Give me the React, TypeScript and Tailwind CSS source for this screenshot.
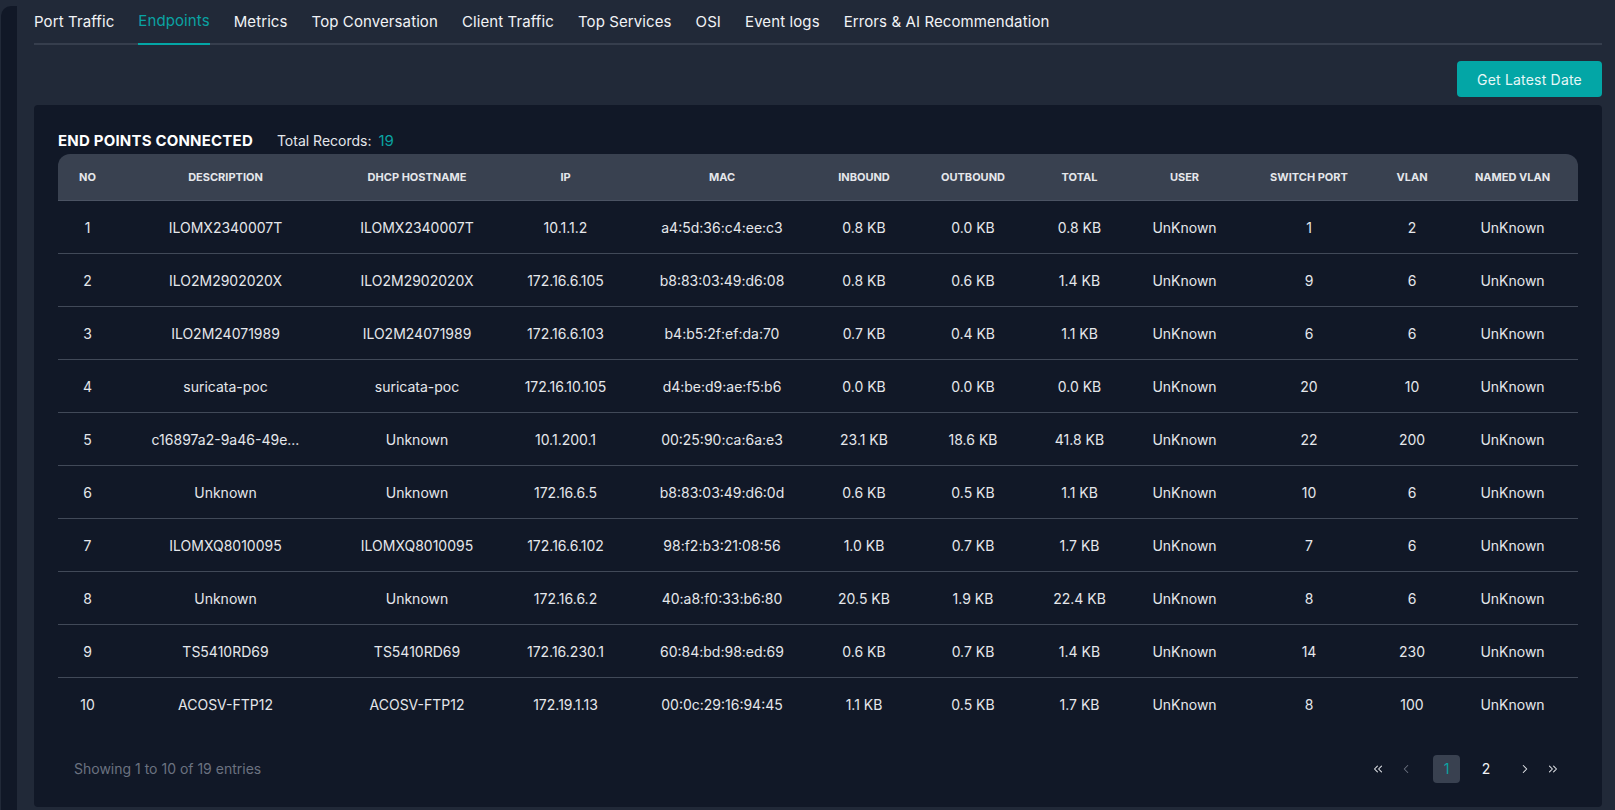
import { ChevronLeft, ChevronRight, ChevronsLeft, ChevronsRight } from 'lucide-react'

const TABS = [
  'Port Traffic',
  'Endpoints',
  'Metrics',
  'Top Conversation',
  'Client Traffic',
  'Top Services',
  'OSI',
  'Event logs',
  'Errors & AI Recommendation',
]

const COLUMNS: { label: string; width: number }[] = [
  { label: 'NO', width: 59 },
  { label: 'DESCRIPTION', width: 217 },
  { label: 'DHCP HOSTNAME', width: 166 },
  { label: 'IP', width: 131 },
  { label: 'MAC', width: 182 },
  { label: 'INBOUND', width: 102 },
  { label: 'OUTBOUND', width: 116 },
  { label: 'TOTAL', width: 97 },
  { label: 'USER', width: 113 },
  { label: 'SWITCH PORT', width: 136 },
  { label: 'VLAN', width: 70 },
  { label: 'NAMED VLAN', width: 131 },
]

const ROWS = [
  ['1', 'ILOMX2340007T', 'ILOMX2340007T', '10.1.1.2', 'a4:5d:36:c4:ee:c3', '0.8 KB', '0.0 KB', '0.8 KB', 'UnKnown', '1', '2', 'UnKnown'],
  ['2', 'ILO2M2902020X', 'ILO2M2902020X', '172.16.6.105', 'b8:83:03:49:d6:08', '0.8 KB', '0.6 KB', '1.4 KB', 'UnKnown', '9', '6', 'UnKnown'],
  ['3', 'ILO2M24071989', 'ILO2M24071989', '172.16.6.103', 'b4:b5:2f:ef:da:70', '0.7 KB', '0.4 KB', '1.1 KB', 'UnKnown', '6', '6', 'UnKnown'],
  ['4', 'suricata-poc', 'suricata-poc', '172.16.10.105', 'd4:be:d9:ae:f5:b6', '0.0 KB', '0.0 KB', '0.0 KB', 'UnKnown', '20', '10', 'UnKnown'],
  ['5', 'c16897a2-9a46-49e...', 'Unknown', '10.1.200.1', '00:25:90:ca:6a:e3', '23.1 KB', '18.6 KB', '41.8 KB', 'UnKnown', '22', '200', 'UnKnown'],
  ['6', 'Unknown', 'Unknown', '172.16.6.5', 'b8:83:03:49:d6:0d', '0.6 KB', '0.5 KB', '1.1 KB', 'UnKnown', '10', '6', 'UnKnown'],
  ['7', 'ILOMXQ8010095', 'ILOMXQ8010095', '172.16.6.102', '98:f2:b3:21:08:56', '1.0 KB', '0.7 KB', '1.7 KB', 'UnKnown', '7', '6', 'UnKnown'],
  ['8', 'Unknown', 'Unknown', '172.16.6.2', '40:a8:f0:33:b6:80', '20.5 KB', '1.9 KB', '22.4 KB', 'UnKnown', '8', '6', 'UnKnown'],
  ['9', 'TS5410RD69', 'TS5410RD69', '172.16.230.1', '60:84:bd:98:ed:69', '0.6 KB', '0.7 KB', '1.4 KB', 'UnKnown', '14', '230', 'UnKnown'],
  ['10', 'ACOSV-FTP12', 'ACOSV-FTP12', '172.19.1.13', '00:0c:29:16:94:45', '1.1 KB', '0.5 KB', '1.7 KB', 'UnKnown', '8', '100', 'UnKnown'],
]

function Tabs() {
  return (
    <nav className="flex gap-6 border-b-2 border-[#363e4d]">
      {TABS.map((tab) => {
        const active = tab === 'Endpoints'
        return (
          <div
            key={tab}
            className={
              active
                ? '-mb-[2px] border-b-2 border-[#03a6a6] pt-[11px] pb-[12px] text-[15px] leading-5 tracking-[0.1px] text-[#0aa3a3]'
                : '-mb-[2px] border-b-2 border-transparent pt-3 pb-[11px] text-[15px] leading-5 tracking-[0.1px] text-[#f1f3f6]'
            }
          >
            {tab}
          </div>
        )
      })}
    </nav>
  )
}

function Pagination() {
  return (
    <div className="flex items-center">
      <button type="button" className="flex h-7 w-7 items-center justify-center text-[#e5e7eb]">
        <ChevronsLeft size={14} strokeWidth={1.75} />
      </button>
      <button type="button" className="flex h-7 w-7 items-center justify-center text-[#6b7280]">
        <ChevronLeft size={14} strokeWidth={1.75} />
      </button>
      <button
        type="button"
        className="ml-[13px] flex h-7 w-[27px] items-center justify-center rounded bg-[#394150] text-[14px] text-[#0aa3a3]"
      >
        1
      </button>
      <button type="button" className="ml-3 flex h-7 w-7 items-center justify-center text-[14px] text-[#f1f3f6]">
        2
      </button>
      <button type="button" className="ml-[11px] flex h-7 w-7 items-center justify-center text-[#e5e7eb]">
        <ChevronRight size={14} strokeWidth={1.75} />
      </button>
      <button type="button" className="flex h-7 w-7 items-center justify-center text-[#e5e7eb]">
        <ChevronsRight size={14} strokeWidth={1.75} />
      </button>
    </div>
  )
}

export default function App() {
  return (
    <div
      className="flex h-[810px] w-full overflow-hidden bg-[#212938]"
      style={{ fontFamily: 'Inter, "Noto Sans", sans-serif' }}
    >
      <aside className="ml-[1px] mt-[6px] w-[16px] flex-shrink-0 rounded-tl-[10px] bg-[#111827]" />

      <main className="flex min-w-0 flex-1 flex-col pl-[17px] pr-[13px]">
        <Tabs />

        <div className="mt-4 flex justify-end">
          <button
            type="button"
            className="h-9 rounded bg-[#03a6a6] px-[20px] text-[14px] tracking-[0.2px] text-[#e6f7f7]"
          >
            Get Latest Date
          </button>
        </div>

        <section className="mt-2 rounded bg-[#111827] px-6 pt-[25px] pb-6">
          <div className="flex items-baseline">
            <h2 className="text-[15px] font-bold leading-5 tracking-[0.2px] text-white">END POINTS CONNECTED</h2>
            <span className="ml-6 text-[14px] text-[#e5e7eb]">Total Records:</span>
            <span className="ml-[7px] text-[15px] text-[#0aa3a3]">19</span>
          </div>

          <table className="mt-px w-full table-fixed border-collapse">
            <colgroup>
              {COLUMNS.map((c) => (
                <col key={c.label} style={{ width: c.width }} />
              ))}
            </colgroup>
            <thead>
              <tr className="h-[47px] bg-[#394150]">
                {COLUMNS.map((c, i) => (
                  <th
                    key={c.label}
                    className={`border-b border-[#4b5363] text-center text-[11px] font-bold text-[#e5e7eb] ${
                      i === 0 ? 'rounded-tl-xl' : ''
                    } ${i === COLUMNS.length - 1 ? 'rounded-tr-xl' : ''}`}
                  >
                    {c.label}
                  </th>
                ))}
              </tr>
            </thead>
            <tbody>
              {ROWS.map((row, r) => (
                <tr
                  key={row[0]}
                  className={r === ROWS.length - 1 ? 'h-[53px]' : 'h-[53px] border-b border-[#414958]'}
                >
                  {row.map((cell, i) => (
                    <td
                      key={i}
                      className="truncate text-center text-[14px] text-[#e5e7eb]"
                    >
                      {cell}
                    </td>
                  ))}
                </tr>
              ))}
            </tbody>
          </table>

          <div className="mt-6 flex items-center justify-between pl-4 pr-[11px]">
            <p className="text-[14px] text-[#6b7280]">Showing 1 to 10 of 19 entries</p>
            <Pagination />
          </div>
        </section>
      </main>
    </div>
  )
}
